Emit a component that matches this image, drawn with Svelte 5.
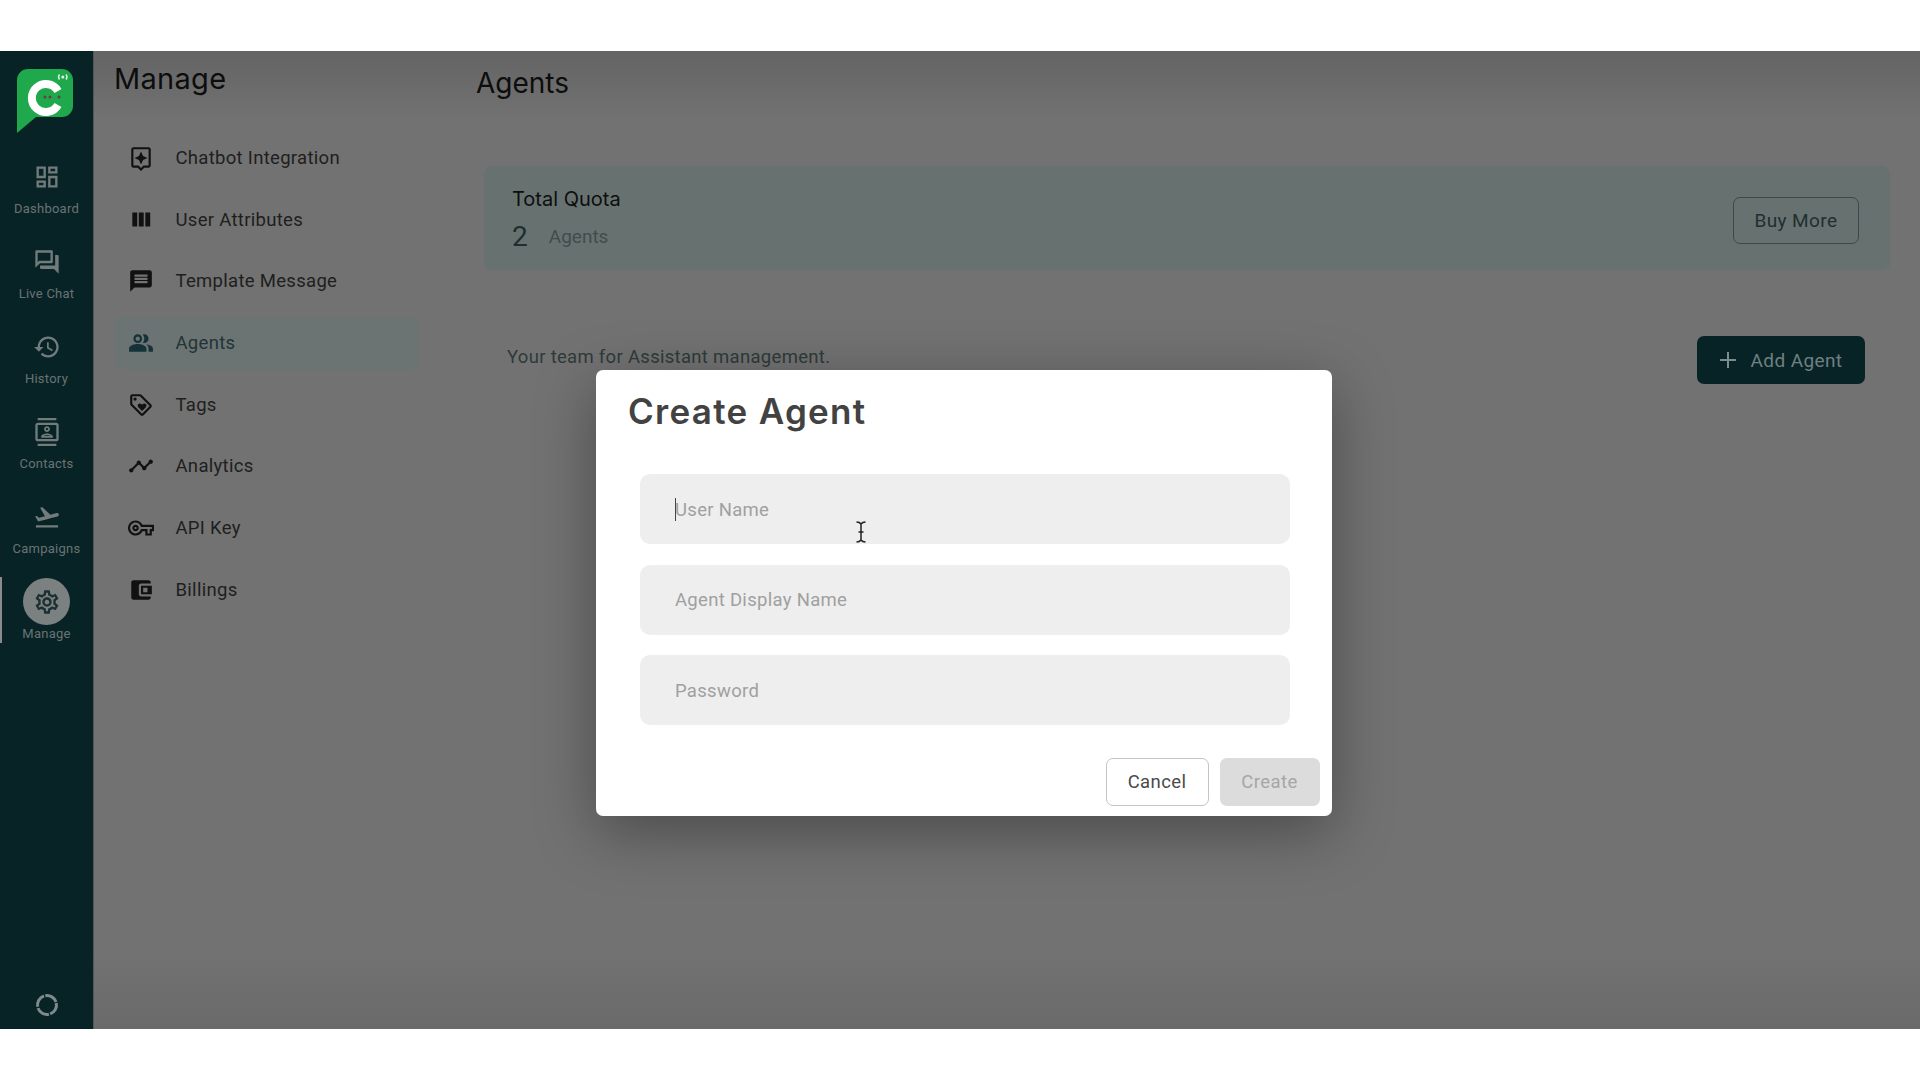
<script>
  const rail = [
    { label: 'Dashboard', d: 'M19 5v2h-4V5h4M9 5v6H5V5h4m10 8v6h-4v-6h4M9 17v2H5v-2h4M21 3h-8v6h8V3zM11 3H3v10h8V3zm10 8h-8v10h8V11zm-10 4H3v6h8v-6z' },
    { label: 'Live Chat', d: 'M15 4v7H5.17L4 12.17V4h11m1-2H3c-.55 0-1 .45-1 1v14l4-4h10c.55 0 1-.45 1-1V3c0-.55-.45-1-1-1zm5 4h-2v9H6v2c0 .55.45 1 1 1h11l4 4V7c0-.55-.45-1-1-1z' },
    { label: 'History', d: 'M13 3c-4.97 0-9 4.03-9 9H1l3.89 3.89.07.14L9 12H6c0-3.87 3.13-7 7-7s7 3.13 7 7-3.13 7-7 7c-1.93 0-3.68-.79-4.94-2.06l-1.42 1.42C8.27 19.99 10.51 21 13 21c4.97 0 9-4.03 9-9s-4.03-9-9-9zm-1 5v5l4.28 2.54.72-1.21-3.5-2.08V8H12z' },
    { label: 'Contacts', d: 'M20 0H4v2h16V0zM4 24h16v-2H4v2zM20 4H4c-1.1 0-2 .9-2 2v12c0 1.1.9 2 2 2h16c1.1 0 2-.9 2-2V6c0-1.1-.9-2-2-2zm0 14H4V6h16v12zm-8-6c1.38 0 2.5-1.12 2.5-2.5S13.38 7 12 7 9.5 8.12 9.5 9.5 10.62 12 12 12zm0-3.5c.55 0 1 .45 1 1s-.45 1-1 1-1-.45-1-1 .45-1 1-1zM17 17v-1.25c0-1.66-3.33-2.5-5-2.5s-5 .84-5 2.5V17h10zm-8.2-1.5c.6-.45 2.1-.75 3.2-.75s2.6.3 3.2.75H8.8z' },
    { label: 'Campaigns', d: 'M2.5 19h19v2h-19zm19.57-9.36c-.21-.8-1.04-1.28-1.84-1.06L14.92 10l-6.9-6.43-1.93.51 4.14 7.17-4.97 1.33-1.97-1.54-1.45.39 1.82 3.16.77 1.33 1.6-.43 5.31-1.42 4.35-1.16L21 11.49c.81-.23 1.28-1.05 1.07-1.85z' },
    { label: 'Manage', active: true, d: 'M19.43 12.98c.04-.32.07-.64.07-.98 0-.34-.03-.66-.07-.98l2.11-1.65c.19-.15.24-.42.12-.64l-2-3.46c-.09-.16-.26-.25-.44-.25-.06 0-.12.01-.17.03l-2.49 1c-.52-.4-1.08-.73-1.69-.98l-.38-2.65C14.46 2.18 14.25 2 14 2h-4c-.25 0-.46.18-.49.42l-.38 2.65c-.61.25-1.17.59-1.69.98l-2.49-1c-.06-.02-.12-.03-.18-.03-.17 0-.34.09-.43.25l-2 3.46c-.13.22-.07.49.12.64l2.11 1.65c-.04.32-.07.65-.07.98 0 .33.03.66.07.98l-2.11 1.65c-.19.15-.24.42-.12.64l2 3.46c.09.16.26.25.44.25.06 0 .12-.01.17-.03l2.49-1c.52.4 1.08.73 1.69.98l.38 2.65c.03.24.24.42.49.42h4c.25 0 .46-.18.49-.42l.38-2.65c.61-.25 1.17-.59 1.69-.98l2.49 1c.06.02.12.03.18.03.17 0 .34-.09.43-.25l2-3.46c.12-.22.07-.49-.12-.64l-2.11-1.65zm-1.98-1.71c.04.31.05.52.05.73 0 .21-.02.43-.05.73l-.14 1.13.89.7 1.08.84-.7 1.21-1.27-.51-1.04-.42-.9.68c-.43.32-.84.56-1.25.73l-1.06.43-.16 1.13-.2 1.35h-1.4l-.19-1.35-.16-1.13-1.06-.43c-.43-.18-.83-.41-1.23-.71l-.91-.7-1.06.43-1.27.51-.7-1.21 1.08-.84.89-.7-.14-1.13c-.03-.31-.05-.54-.05-.74s.02-.43.05-.73l.14-1.13-.89-.7-1.08-.84.7-1.21 1.27.51 1.04.42.9-.68c.43-.32.84-.56 1.25-.73l1.06-.43.16-1.13.2-1.35h1.39l.19 1.35.16 1.13 1.06.43c.43.18.83.41 1.23.71l.91.7 1.06-.43 1.27-.51.7 1.21-1.07.85-.89.7.14 1.13zM12 8c-2.21 0-4 1.79-4 4s1.79 4 4 4 4-1.79 4-4-1.79-4-4-4zm0 6c-1.1 0-2-.9-2-2s.9-2 2-2 2 .9 2 2-.9 2-2 2z' }
  ];

  const menu = [
    { label: 'Chatbot Integration', d: 'M19 2H5c-1.1 0-2 .9-2 2v15c0 1.1.9 2 2 2h4l3 3 3-3h4c1.1 0 2-.9 2-2V4c0-1.1-.9-2-2-2zm0 17h-4.83L12 21.17 9.83 19H5V4h14v15zM12 6l1.9 4.1L18 12l-4.1 1.9L12 18l-1.9-4.1L6 12l4.1-1.9z' },
    { label: 'User Attributes', d: 'M10 18h4.5V5H10v13zm-6 0h4.500V5H4v13zM16 5v13h4.500V5H16z' },
    { label: 'Template Message', d: 'M20 2H4c-1.1 0-1.99.9-1.99 2L2 22l4-4h14c1.1 0 2-.9 2-2V4c0-1.1-.9-2-2-2zm-2 12H6v-2h12v2zm0-3H6V9h12v2zm0-3H6V6h12v2z' },
    { label: 'Agents', active: true, d: 'M16.67 13.13C18.04 14.06 19 15.32 19 17v3h4v-3c0-2.18-3.57-3.47-6.33-3.87zM15 12c2.21 0 4-1.79 4-4s-1.79-4-4-4c-.47 0-.91.1-1.33.24C14.5 5.27 15 6.58 15 8s-.5 2.73-1.33 3.76c.42.14.86.24 1.33.24zM9 12c2.21 0 4-1.79 4-4s-1.79-4-4-4-4 1.79-4 4 1.79 4 4 4zm0-6c1.1 0 2 .9 2 2s-.9 2-2 2-2-.9-2-2 .9-2 2-2zM9 13c-2.67 0-8 1.34-8 4v3h16v-3c0-2.66-5.33-4-8-4z' },
    { label: 'Tags', d: 'M21.41 11.58l-9-9C12.05 2.22 11.55 2 11 2H4c-1.1 0-2 .9-2 2v7c0 .55.22 1.05.59 1.42l9 9c.36.36.86.58 1.41.58s1.05-.22 1.41-.59l7-7c.37-.36.59-.86.59-1.41s-.23-1.06-.59-1.42zM13 20.010L4 11V4h7v-.01l9 8.99-7 7.030zM6.500 5a1.500 1.500 0 1 0 0 3 1.500 1.500 0 0 0 0-3zM8.900 12.550c0 .57.23 1.070.6 1.450l3.500 3.500 3.500-3.500c.37-.37.6-.89.6-1.450 0-1.130-.92-2.050-2.050-2.050-.57 0-1.080.23-1.450.61l-.6.6-.6-.59c-.37-.38-.89-.62-1.450-.62-1.130 0-2.050.92-2.050 2.050z' },
    { label: 'Analytics', d: 'M23 8c0 1.100-.9 2-2 2-.18 0-.35-.02-.51-.07l-3.560 3.550c.05.16.07.34.07.52 0 1.100-.9 2-2 2s-2-.9-2-2c0-.18.02-.36.07-.52l-2.550-2.550c-.16.05-.34.07-.52.07s-.36-.02-.52-.07l-4.550 4.560c.05.16.07.33.07.51 0 1.100-.9 2-2 2s-2-.9-2-2 .9-2 2-2c.18 0 .35.02.51.07l4.560-4.550C8.020 9.360 8 9.180 8 9c0-1.100.9-2 2-2s2 .9 2 2c0 .18-.02.36-.07.52l2.550 2.550c.16-.05.34-.07.52-.07s.36.02.52.07l3.550-3.560C19.020 8.350 19 8.180 19 8c0-1.100.9-2 2-2s2 .9 2 2z' },
    { label: 'API Key', d: 'M22 19h-6v-4h-2.680c-1.140 2.420-3.600 4-6.320 4-3.860 0-7-3.140-7-7s3.140-7 7-7c2.720 0 5.170 1.580 6.320 4H24v6h-2v4zm-4-2h2v-4h2v-2H11.940l-.23-.67C11.010 8.340 9.110 7 7 7c-2.760 0-5 2.240-5 5s2.240 5 5 5c2.110 0 4.010-1.340 4.710-3.330l.23-.67H18v4zM7 15c-1.650 0-3-1.350-3-3s1.350-3 3-3 3 1.350 3 3-1.350 3-3 3zm0-4c-.55 0-1 .45-1 1s.45 1 1 1 1-.45 1-1-.45-1-1-1z' },
    { label: 'Billings', d: 'M21 18v1c0 1.100-.9 2-2 2H5c-1.110 0-2-.9-2-2V5c0-1.100.89-2 2-2h14c1.100 0 2 .9 2 2v1h-9c-1.110 0-2 .9-2 2v8c0 1.100.89 2 2 2h9zm-9-2h10V8H12v8zm2-6h4v4h-4v-4z' }
  ];
</script>

<div class="page">
  <div class="app">
    <aside class="rail">
      <svg class="logo" viewBox="0 0 58 66" width="58" height="66">
        <path d="M12 1h34a11 11 0 0 1 11 11v26a11 11 0 0 1-11 11H20L1 65V12A11 11 0 0 1 12 1z" fill="#1fa84c" />
        <path d="M42 23A14 14 0 1 0 42 37" fill="none" stroke="#fff" stroke-width="8" />
        <circle cx="29" cy="29" r="1.500" fill="#6b3d44" />
        <circle cx="34" cy="29" r="1.500" fill="#6b3d44" />
        <circle cx="43" cy="29" r="1.500" fill="#6b3d44" />
        <path d="M43.500 6.500c-1.200 1.500-1.200 3.500 0 5M50 6.500c1.200 1.500 1.200 3.500 0 5" fill="none" stroke="#dff5e5" stroke-width="1.400" />
        <circle cx="46.800" cy="9" r="1.500" fill="#dff5e5" />
      </svg>

      {#each rail as item}
        <div class="rail-item" class:active={item.active}>
          <span class="rail-icon">
            <svg viewBox="0 0 24 24" width="28" height="28"><path d={item.d} /></svg>
          </span>
          <span class="rail-label">{item.label}</span>
        </div>
      {/each}

      <svg class="loader" viewBox="0 0 24 24" width="24" height="24">
        <circle cx="12" cy="12" r="9.500" fill="none" stroke="#7f8a8b" stroke-width="3" stroke-dasharray="13.500 1.420" transform="rotate(-12 12 12)" />
      </svg>
    </aside>

    <nav class="menu">
      <h2>Manage</h2>
      <ul>
        {#each menu as item}
          <li class:active={item.active}>
            <svg viewBox="0 0 24 24" width="26" height="26"><path d={item.d} /></svg>
            {item.label}
          </li>
        {/each}
      </ul>
    </nav>

    <main class="content">
      <h1>Agents</h1>
      <section class="quota">
        <div>
          <h3>Total Quota</h3>
          <p><b>2</b><span>Agents</span></p>
        </div>
        <button class="buy">Buy More</button>
      </section>
      <section class="team">
        <p>Your team for Assistant management.</p>
        <button class="add">
          <svg viewBox="0 0 16 16" width="16" height="16"><path d="M8 0v16M0 8h16" /></svg>
          Add Agent
        </button>
      </section>
    </main>

    <div class="modal">
      <h2>Create Agent</h2>
      <div class="fields">
        <div class="field focused"><span class="caret"></span>User Name</div>
        <div class="field">Agent Display Name</div>
        <div class="field">Password</div>
      </div>
      <div class="actions">
        <button class="cancel">Cancel</button>
        <button class="create">Create</button>
      </div>
    </div>

    <svg class="cursor" viewBox="0 0 12 24" width="12" height="24">
      <path d="M1.500 2c2.500 0 3.500.5 4.500 2 1-1.500 2-2 4.500-2M1.500 22c2.500 0 3.500-.5 4.500-2 1 1.500 2 2 4.500 2M6 4v16M3.500 12h5" />
    </svg>
  </div>
</div>

<style>
  :global(body) {
    margin: 0;
    background: #fff;
  }

  .page {
    height: 1080px;
    padding-top: 51px;
    box-sizing: border-box;
    font-family: Roboto, sans-serif;
  }

  .app {
    position: relative;
    display: flex;
    height: 978px;
    background: linear-gradient(#646464, #727272 70px, #727272 900px, #6a6a6a);
    overflow: hidden;
  }

  .rail {
    display: flex;
    flex-direction: column;
    align-items: center;
    width: 94px;
    flex: none;
    background: #082326;
    border-right: 1px solid #555;
    box-sizing: border-box;
  }

  .logo {
    margin: 17px 0 0 -3px;
    flex: none;
  }

  .rail-item {
    display: flex;
    flex-direction: column;
    align-items: center;
    height: 85px;
    width: 100%;
    position: relative;
    color: #687374;
    font-size: 13px;
    letter-spacing: 0.25px;
  }

  .rail-item:first-of-type {
    margin-top: 19px;
  }

  .rail-icon {
    width: 47px;
    height: 47px;
    display: flex;
    align-items: center;
    justify-content: center;
    border-radius: 50%;
    flex: none;
  }

  .rail-icon svg {
    fill: #727c7d;
  }

  .rail-label {
    margin-top: 1px;
  }

  .rail-item.active .rail-icon {
    background: #7b8081;
  }

  .rail-item.active .rail-icon svg {
    fill: #1c2f32;
  }

  .rail-item.active::before {
    content: '';
    position: absolute;
    left: 0;
    top: -1px;
    width: 2px;
    height: 66px;
    background: #8b8b8b;
  }

  .loader {
    margin-top: auto;
    margin-bottom: 12px;
  }

  .menu {
    width: 341px;
    flex: none;
    box-sizing: border-box;
    padding: 0 0 0 20px;
  }

  .menu h2 {
    margin: 12px 0 0;
    font: 400 29px/32px Inter, sans-serif;
    color: #0d0d0d;
    letter-spacing: 0.3px;
  }

  ul {
    list-style: none;
    margin: 36px 0 0;
    padding: 0;
    width: 306px;
  }

  li {
    display: flex;
    align-items: center;
    height: 54px;
    margin-bottom: 7.700px;
    gap: 21.500px;
    padding-left: 14px;
    font-size: 18.500px;
    letter-spacing: 0.3px;
    color: #1e1e1e;
    border-radius: 10px;
  }

  li svg {
    fill: #111;
    flex: none;
  }

  li.active {
    background: #6b7473;
    color: #233336;
  }

  li.active svg {
    fill: #143238;
  }

  .content {
    flex: 1;
    padding: 0 30px 0 41px;
    min-width: 0;
  }

  h1 {
    margin: 16px 0 0;
    font: 400 28px/32px Inter, sans-serif;
    color: #0d0d0d;
  }

  .quota {
    display: flex;
    justify-content: space-between;
    align-items: center;
    margin: 67px 0 0 8px;
    height: 104px;
    padding: 0 31px 0 28px;
    background: #677270;
    border-radius: 8px;
  }

  .quota > div {
    padding-top: 3px;
  }

  h3 {
    margin: 0;
    font: 400 20px/24px Inter, sans-serif;
    color: #0e0e0e;
  }

  .quota p {
    display: flex;
    align-items: center;
    gap: 21px;
    margin: 9px 0 0;
    color: #414c4c;
    font-size: 19px;
  }

  .quota b {
    font-weight: 400;
    font-size: 28px;
    color: #1e2e30;
  }

  button {
    font-family: Roboto, sans-serif;
    font-size: 18.500px;
    letter-spacing: 0.4px;
    box-sizing: border-box;
    border-radius: 7px;
    padding: 0;
  }

  .buy {
    width: 126px;
    height: 47px;
    background: none;
    border: 1.500px solid #3e4849;
    color: #1f2e30;
    font-size: 19px;
    position: relative;
    top: 2px;
  }

  .team {
    display: flex;
    justify-content: space-between;
    align-items: center;
    margin-top: 66px;
    padding: 0 25px 0 31px;
  }

  .team p {
    margin: 0;
    position: relative;
    top: -3px;
    font-size: 18.500px;
    letter-spacing: 0.3px;
    color: #2f3a3a;
  }

  .add {
    display: flex;
    align-items: center;
    justify-content: center;
    gap: 15px;
    width: 168px;
    height: 48px;
    background: #082326;
    border: 0;
    color: #6f8082;
    font-size: 19px;
  }

  .add svg {
    fill: none;
    stroke: #7d8c8d;
    stroke-width: 2;
  }

  .modal {
    position: absolute;
    left: 596px;
    top: 319px;
    width: 736px;
    height: 446px;
    box-sizing: border-box;
    padding: 18px 12.500px 0 32px;
    background: #fff;
    border-radius: 7px;
    box-shadow: 0 16px 60px rgba(0, 0, 0, 0.35);
  }

  .modal h2 {
    margin: 0;
    font: 600 35px/46px Inter, sans-serif;
    letter-spacing: 1.300px;
    color: #424242;
  }

  .fields {
    display: flex;
    flex-direction: column;
    gap: 20.500px;
    width: 650px;
    margin: 40px 0 0 12px;
  }

  .field {
    position: relative;
    display: flex;
    align-items: center;
    height: 70px;
    box-sizing: border-box;
    padding: 1px 0 0 35px;
    background: #eeeeee;
    border-radius: 10px;
    font-size: 18.500px;
    letter-spacing: 0.3px;
    color: #a0a0a0;
  }

  .caret {
    position: absolute;
    left: 35px;
    top: 24px;
    width: 1px;
    height: 23px;
    background: #444;
  }

  .actions {
    display: flex;
    justify-content: flex-end;
    gap: 11px;
    margin-top: 33px;
  }

  .actions button {
    height: 48px;
  }

  .cancel {
    width: 103px;
    background: #fff;
    border: 1.500px solid #c4c4c4;
    color: #4a4a4a;
  }

  .create {
    width: 100px;
    background: #dcdcdc;
    border: 0;
    color: #a6a6a6;
  }

  .cursor {
    position: absolute;
    left: 855px;
    top: 469px;
    fill: none;
    stroke: #222;
    stroke-width: 1.500;
  }
</style>
